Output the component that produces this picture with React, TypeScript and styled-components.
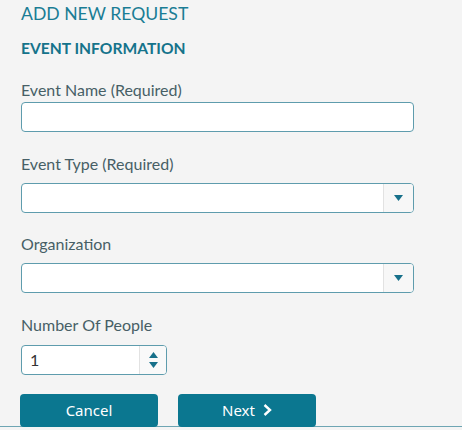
import styled, { createGlobalStyle } from 'styled-components';

const GlobalStyle = createGlobalStyle`
  html, body {
    margin: 0;
    padding: 0;
    background: #f4f4f4;
  }
  body {
    font-family: Lato, 'Noto Sans', sans-serif;
  }
`;

const Page = styled.div`
  display: flex;
  flex-direction: column;
  width: 462px;
  height: 430px;
  padding-left: 21px;
  box-sizing: border-box;
  overflow: hidden;
`;

const Title = styled.h1`
  margin: 3px 0 0;
  font-size: 17.6px;
  line-height: 1.2;
  font-weight: 400;
  color: #1a7d95;
`;

const Section = styled.h2`
  margin: 14.5px 0 0;
  font-size: 15.6px;
  line-height: 1.2;
  font-weight: 700;
  color: #15738b;
`;

const Field = styled.div<{ $top: number }>`
  display: flex;
  flex-direction: column;
  margin-top: ${(p) => p.$top}px;
`;

const Label = styled.label<{ $gap: number }>`
  font-size: 16px;
  line-height: 1.2;
  color: #475f66;
  margin-bottom: ${(p) => p.$gap}px;
`;

const TextInput = styled.input`
  width: 393px;
  height: 30px;
  box-sizing: border-box;
  border: 1px solid #5e9cad;
  border-radius: 4px;
  background: #ffffff;
  padding: 0 10px;
  font-family: Lato, sans-serif;
  font-size: 15px;
  outline: none;
`;

const SelectBox = styled.div`
  display: flex;
  width: 393px;
  height: 30px;
  box-sizing: border-box;
  border: 1px solid #5e9cad;
  border-radius: 4px;
  background: #ffffff;
  overflow: hidden;
`;

const NativeSelect = styled.select`
  flex: 1;
  appearance: none;
  border: none;
  background: transparent;
  padding: 0 10px;
  font-family: Lato, sans-serif;
  font-size: 15px;
  outline: none;
`;

const ArrowCell = styled.div`
  display: flex;
  align-items: center;
  justify-content: center;
  width: 29px;
  border-left: 1px solid #e2e2e2;
  background: #f7f7f7;
`;

const NumberBox = styled.div`
  display: flex;
  width: 146px;
  height: 30px;
  box-sizing: border-box;
  border: 1px solid #5e9cad;
  border-radius: 4px;
  background: #ffffff;
  overflow: hidden;
`;

const NumberInput = styled.input`
  flex: 1;
  min-width: 0;
  border: none;
  background: transparent;
  padding: 0 0 0 8px;
  font-family: Lato, sans-serif;
  font-size: 16px;
  color: #333333;
  outline: none;
`;

const Spinner = styled.div`
  display: flex;
  flex-direction: column;
  align-items: center;
  justify-content: center;
  gap: 4px;
  width: 26px;
  border-left: 1px solid #e2e2e2;
  background: #f9f9f9;
`;

const ButtonBar = styled.div`
  display: flex;
  gap: 20px;
  margin: 19px 0 0 -21px;
  padding-left: 20px;
  border-bottom: 1px solid #6ea5b3;
`;

const Button = styled.button`
  display: flex;
  align-items: center;
  justify-content: center;
  gap: 8px;
  width: 138px;
  height: 33px;
  margin-bottom: -1px;
  border: none;
  border-radius: 4px;
  background: #0b7790;
  color: #ffffff;
  font-family: 'Noto Sans', sans-serif;
  font-size: 15px;
  padding: 0;
  cursor: pointer;
`;

const Caret = ({ up = false }: { up?: boolean }) => (
  <svg width="9" height="6" viewBox="0 0 9 6">
    <path d={up ? 'M0 6 L4.5 0 L9 6 Z' : 'M0 0 L9 0 L4.5 6 Z'} fill="#17708a" />
  </svg>
);

const Select = ({ id }: { id: string }) => (
  <SelectBox>
    <NativeSelect id={id} defaultValue="">
      <option value=""></option>
    </NativeSelect>
    <ArrowCell>
      <Caret />
    </ArrowCell>
  </SelectBox>
);

const App = () => (
  <>
    <GlobalStyle />
    <Page>
      <Title>ADD NEW REQUEST</Title>
      <Section>EVENT INFORMATION</Section>

      <Field $top={23}>
        <Label htmlFor="name" $gap={2}>Event Name (Required)</Label>
        <TextInput id="name" />
      </Field>

      <Field $top={22}>
        <Label htmlFor="type" $gap={10}>Event Type (Required)</Label>
        <Select id="type" />
      </Field>

      <Field $top={21}>
        <Label htmlFor="org" $gap={10}>Organization</Label>
        <Select id="org" />
      </Field>

      <Field $top={22}>
        <Label htmlFor="people" $gap={10.5}>Number Of People</Label>
        <NumberBox>
          <NumberInput id="people" defaultValue="1" />
          <Spinner>
            <Caret up />
            <Caret />
          </Spinner>
        </NumberBox>
      </Field>

      <ButtonBar>
        <Button>Cancel</Button>
        <Button>
          Next
          <svg width="9" height="12" viewBox="0 0 9 12">
            <path d="M1.5 1 L7 6 L1.5 11" fill="none" stroke="#ffffff" strokeWidth="2.4" />
          </svg>
        </Button>
      </ButtonBar>
    </Page>
  </>
);

export default App;
